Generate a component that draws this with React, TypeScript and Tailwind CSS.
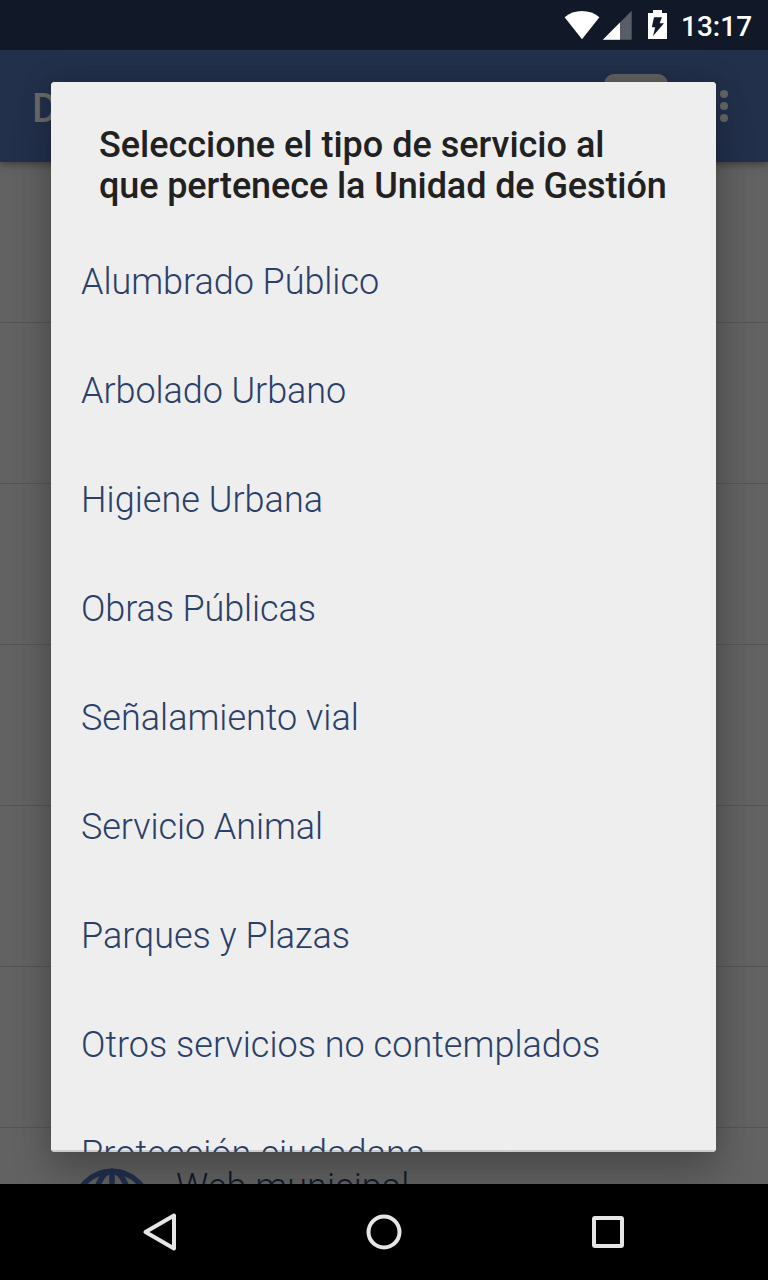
const services = [
  { name: "Alumbrado Público", tracking: "tracking-[-0.04px]" },
  { name: "Arbolado Urbano", tracking: "tracking-[-0.07px]" },
  { name: "Higiene Urbana", tracking: "tracking-[0.03px]" },
  { name: "Obras Públicas", tracking: "tracking-[-0.1px]" },
  { name: "Señalamiento vial", tracking: "tracking-normal" },
  { name: "Servicio Animal", tracking: "tracking-[-0.07px]" },
  { name: "Parques y Plazas", tracking: "tracking-normal" },
  { name: "Otros servicios no contemplados", tracking: "tracking-[0.02px]" },
  { name: "Protección ciudadana", tracking: "tracking-[0.1px]" },
];

const emptyRows = [1, 2, 3, 4, 5, 6];

function StatusBar() {
  return (
    <div className="relative z-20 flex h-[50px] shrink-0 items-start bg-[#111827] pl-[564px] text-white">
      <svg className="mt-[10px] h-[30px] w-9" viewBox="0 0 36 30" fill="currentColor">
        <path d="M18 29.3L.6 7.2C5.5 3.2 11.4 1 18 1s12.5 2.2 17.4 6.2z" />
      </svg>
      <svg className="mt-[10px] ml-[2px] h-[30px] w-[30px]" viewBox="0 0 30 30" fill="currentColor">
        <path d="M.8 29.7L29.7.7v29z" opacity="0.3" />
        <path d="M.8 29.7L18 12.4v17.3z" />
      </svg>
      <svg className="mt-[10px] ml-4 h-[30px] w-[19px]" viewBox="0 0 19 30">
        <path d="M5 0h9v3h5v26H0V3h5z" fill="currentColor" />
        <path d="M6 7.3h8L11.6 13.3H16L5 26l2.2-8.8H3.8z" fill="#111827" />
      </svg>
      <span className="mt-[10px] ml-[14px] text-[28px] leading-[33px] font-medium">13:17</span>
    </div>
  );
}

function Toolbar() {
  return (
    <header className="relative z-10 flex h-28 shrink-0 items-center bg-[#22304b] pl-8 shadow-[0_2px_8px_rgba(0,0,0,0.4)]">
      <span className="w-[572px] pt-1 text-[40px] leading-[47px] font-medium text-[#6a6a6a]">D</span>
      <div className="h-16 w-16 rounded-[10px] bg-[#616161]" />
      <div className="ml-[52px] flex flex-col gap-1">
        <span className="size-2 rounded-full bg-[#666]" />
        <span className="size-2 rounded-full bg-[#666]" />
        <span className="size-2 rounded-full bg-[#666]" />
      </div>
    </header>
  );
}

function Globe() {
  return (
    <svg className="size-20" viewBox="0 0 80 80" fill="none" stroke="#22304f" strokeWidth="5.5">
      <circle cx="40" cy="40.5" r="37.2" />
      <ellipse cx="40" cy="40.5" rx="18" ry="37.2" />
      <path d="M40 3v74M3 40h74" />
    </svg>
  );
}

function Background() {
  return (
    <main className="flex flex-1 flex-col overflow-hidden bg-[#626262]">
      {emptyRows.map((row) => (
        <div key={row} className="h-[161px] shrink-0 border-b border-[#545454]" />
      ))}
      <div className="flex h-40 shrink-0 items-start gap-6 pt-10 pl-[72px]">
        <Globe />
        <span className="mt-[-2px] text-[36px] leading-[42px] font-light tracking-[0.05px] text-[#111a2c]">
          Web municipal
        </span>
      </div>
    </main>
  );
}

function ServiceDialog() {
  return (
    <div className="absolute top-[82px] left-[51px] z-30 h-[1070px] w-[665px] rounded bg-[#eee] shadow-[0_28px_40px_rgba(0,0,0,0.17),0_0_30px_rgba(0,0,0,0.18)]">
      <div className="flex h-full flex-col overflow-hidden rounded bg-linear-to-b from-[#eee] from-[1068px] to-[#ccc] to-[1068px] pt-[43px]">
        <h1 className="pl-12 text-[36px] leading-[41px] font-medium text-[#212121]">
          Seleccione el tipo de servicio al
          <br />
          <span className="tracking-[-0.1px]">que pertenece la Unidad de Gestión</span>
        </h1>
        <ul className="mt-5">
          {services.map((service) => (
            <li key={service.name} className="flex h-[109px] items-center pl-[30px]">
              <span className={`text-[36px] leading-[42px] font-light text-[#2a4068] ${service.tracking}`}>
                {service.name}
              </span>
            </li>
          ))}
        </ul>
      </div>
    </div>
  );
}

function NavigationBar() {
  return (
    <nav className="relative z-40 flex h-24 shrink-0 items-center justify-between bg-black px-[136px]">
      <svg className="size-12" viewBox="0 0 48 48" fill="none" stroke="#e6e6e6" strokeWidth="4" strokeLinejoin="round">
        <path d="M38 7.5v33L9.5 24z" />
      </svg>
      <svg className="size-12" viewBox="0 0 48 48" fill="none" stroke="#e6e6e6" strokeWidth="4">
        <circle cx="24" cy="24" r="15.5" />
      </svg>
      <svg className="size-12" viewBox="0 0 48 48" fill="none" stroke="#e6e6e6" strokeWidth="4">
        <rect x="10" y="10" width="28" height="28" rx="1" />
      </svg>
    </nav>
  );
}

export default function App() {
  return (
    <div className="relative flex h-[1280px] w-[768px] flex-col overflow-hidden font-['Roboto',sans-serif]">
      <StatusBar />
      <Toolbar />
      <Background />
      <ServiceDialog />
      <NavigationBar />
    </div>
  );
}
